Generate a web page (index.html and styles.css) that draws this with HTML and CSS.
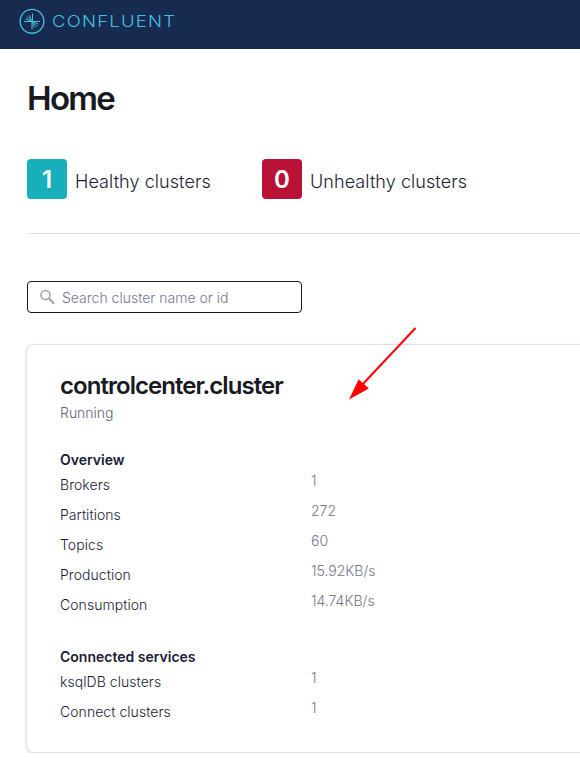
FILE: index.html
```html
<!DOCTYPE html>
<html lang="en">
<head>
<meta charset="utf-8">
<title>Home</title>
<link rel="stylesheet" href="styles.css">
</head>
<body>
<header class="topbar">
  <svg class="mark" viewBox="0 0 26 26" width="26" height="26" fill="none" stroke="#42c1e0">
    <circle cx="13" cy="13.3" r="11.9" stroke-width="1.35"/>
    <path stroke-width="1" d="M5 13.5h8.5V5.5M13 13.5h8M13 13.5v8M12.5 12.5L10.6 7.3M12.2 12.7L8 8.3M12 13L6.6 10.8M13.5 14.5l1.9 5.2M13.8 14.3l4.2 4.4M14 14l5.4 2.2"/>
  </svg>
  <span class="wordmark">CONFLUENT</span>
</header>
<main class="page">
  <h1 class="title">Home</h1>
  <section class="summary">
    <div class="stat"><span class="count healthy">1</span><span class="stat-label">Healthy clusters</span></div>
    <div class="stat"><span class="count unhealthy">0</span><span class="stat-label">Unhealthy clusters</span></div>
  </section>
  <div class="search">
    <svg class="search-icon" viewBox="0 0 16 16" width="16" height="16" fill="none" stroke="#a2a1b2">
      <circle cx="5.5" cy="6" r="4.5" stroke-width="1.6"/>
      <path d="M9 9.5l5.2 5.2" stroke-width="2"/>
    </svg>
    <span class="placeholder">Search cluster name or id</span>
  </div>
  <section class="card">
    <h2 class="cluster">controlcenter.cluster</h2>
    <p class="status">Running</p>
    <h3 class="group">Overview</h3>
    <dl class="rows">
      <dt>Brokers</dt><dd>1</dd>
      <dt>Partitions</dt><dd>272</dd>
      <dt>Topics</dt><dd>60</dd>
      <dt>Production</dt><dd>15.92KB/s</dd>
      <dt>Consumption</dt><dd>14.74KB/s</dd>
    </dl>
    <h3 class="group services">Connected services</h3>
    <dl class="rows">
      <dt>ksqlDB clusters</dt><dd>1</dd>
      <dt>Connect clusters</dt><dd>1</dd>
    </dl>
    <svg class="arrow" viewBox="0 0 70 75" width="70" height="75">
      <path d="M67.5 2L14 59" stroke="#f00" stroke-width="2" fill="none"/>
      <path d="M1 73.5L10.7 53.2L20.8 62.6Z" fill="#f00"/>
    </svg>
  </section>
</main>
</body>
</html>
```
FILE: styles.css
```css
* { box-sizing: border-box; }
body {
  margin: 0;
  background: #fff;
  color: #1b1b35;
  font: 300 14px/20px Inter, sans-serif;
}
h1, h2, h3, p, dl, dd { margin: 0; }
.topbar {
  display: flex;
  align-items: flex-start;
  height: 49px;
  padding: 8px 0 0 18.5px;
  background: #172a50;
}
.mark { flex: none; }
.wordmark {
  margin: 3px 0 0 7.5px;
  color: #42c1e0;
  font: 300 16.5px/21px Inter, sans-serif;
  letter-spacing: 1.1px;
  transform: scaleX(1.12);
  transform-origin: left;
}
.page { padding: 29px 0 0 27px; }
.title {
  color: #191924;
  font-size: 33px;
  font-weight: 600;
  line-height: 40px;
  letter-spacing: -1.7px;
}
.summary {
  display: flex;
  height: 116px;
  padding-top: 41px;
  border-bottom: 1px solid #e0e0e0;
}
.stat { display: flex; width: 235px; flex: none; }
.count {
  width: 40px;
  height: 40px;
  border-radius: 4px;
  color: #fff;
  font-size: 24px;
  font-weight: 600;
  line-height: 41px;
  text-align: center;
}
.healthy { background: #16afba; }
.unhealthy { background: #b91237; }
.stat-label { margin: 11px 0 0 8px; font-size: 18px; line-height: 24px; letter-spacing: .07px; }
.search {
  display: flex;
  align-items: center;
  width: 275px;
  height: 32px;
  margin-top: 47px;
  padding-left: 12px;
  border: 1px solid #191924;
  border-radius: 4px;
  color: #77768f;
}
.search-icon { margin-right: 6px; }
.placeholder { padding-top: 2px; }
.card {
  position: relative;
  height: 409px;
  margin: 31px 0 0 -1px;
  padding: 27px 0 0 33px;
  border: 1px solid #e0e0e0;
  border-right: 0;
  border-radius: 8px 0 0 8px;
  box-shadow: 0 1px 3px rgba(0, 0, 0, .12);
}
.cluster { color: #191924; font-size: 24px; font-weight: 600; line-height: 28px; letter-spacing: -.95px; }
.status { margin-top: 3px; color: #65657c; }
.group { margin-top: 27px; font-size: 14px; font-weight: 600; line-height: 20px; }
.rows {
  display: grid;
  grid-template-columns: 251px 1fr;
  grid-auto-rows: 30px;
}
.rows dt { padding-top: 5px; letter-spacing: .05px; }
.rows dd { padding-top: 1px; color: #77768f; }
.arrow { position: absolute; left: 321px; top: -19px; }
```
